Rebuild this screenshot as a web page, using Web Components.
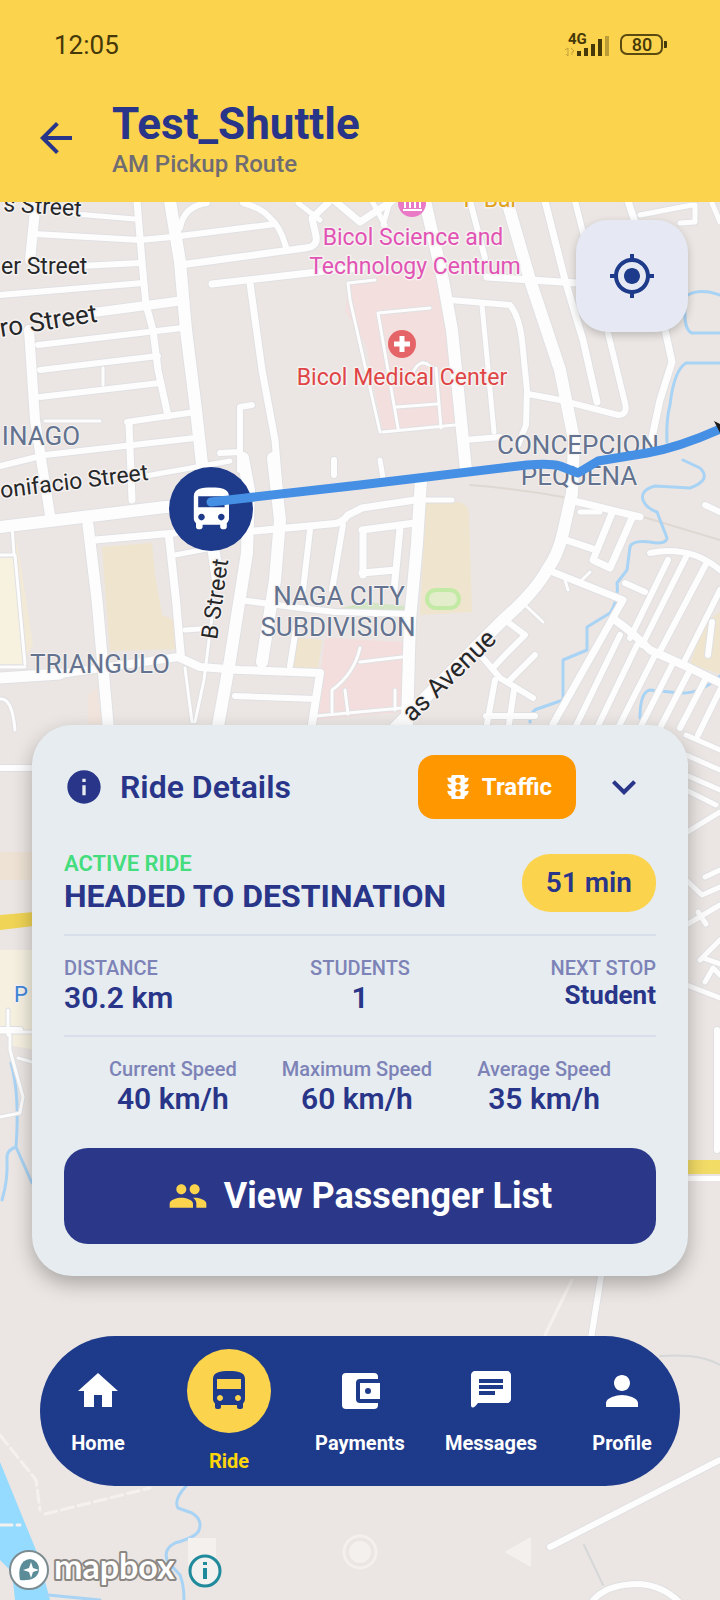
<!DOCTYPE html>
<html lang="en">
<head>
<meta charset="utf-8">
<meta name="viewport" content="width=device-width, initial-scale=1">
<title>Test_Shuttle</title>
<style>
    body {
        margin: 0;
        font-family: Roboto, "Liberation Sans", sans-serif;
        color: #283589;
    }
</style>
</head>
<body>

<ride-screen>
    <map-view slot="map"></map-view>
    <app-header slot="header" title="Test_Shuttle" subtitle="AM Pickup Route" time="12:05" battery="80"></app-header>
    <locate-button slot="locate"></locate-button>
    <ride-card slot="card" status="ACTIVE RIDE" heading="HEADED TO DESTINATION" eta="51 min">
        <stat-item slot="stats" label="DISTANCE" value="30.2 km" align="start"></stat-item>
        <stat-item slot="stats" label="STUDENTS" value="1"></stat-item>
        <stat-item slot="stats" label="NEXT STOP" value="Student" align="end" small></stat-item>
        <stat-item slot="speeds" label="Current Speed" value="40 km/h"></stat-item>
        <stat-item slot="speeds" label="Maximum Speed" value="60 km/h"></stat-item>
        <stat-item slot="speeds" label="Average Speed" value="35 km/h"></stat-item>
    </ride-card>
    <tab-bar slot="tabs">
        <tab-item icon="home">Home</tab-item>
        <tab-item icon="bus" active>Ride</tab-item>
        <tab-item icon="wallet">Payments</tab-item>
        <tab-item icon="chat">Messages</tab-item>
        <tab-item icon="person">Profile</tab-item>
    </tab-bar>
    <system-nav slot="footer"></system-nav>
    <map-attribution slot="footer"></map-attribution>
</ride-screen>

<script>
const ICONS = {
    back: 'M20 11H7.83l5.59-5.59L12 4l-8 8 8 8 1.41-1.41L7.83 13H20v-2z',
    locate: 'M12 8c-2.21 0-4 1.79-4 4s1.79 4 4 4 4-1.79 4-4-1.79-4-4-4zm8.94 3c-.46-4.17-3.77-7.48-7.94-7.94V1h-2v2.06C6.83 3.52 3.52 6.83 3.06 11H1v2h2.06c.46 4.17 3.77 7.48 7.94 7.94V23h2v-2.06c4.17-.46 7.48-3.77 7.94-7.94H23v-2h-2.06zM12 19c-3.87 0-7-3.13-7-7s3.13-7 7-7 7 3.13 7 7-3.13 7-7 7z',
    info: 'M12 2C6.48 2 2 6.48 2 12s4.48 10 10 10 10-4.48 10-10S17.52 2 12 2zm1 15h-2v-6h2v6zm0-8h-2V7h2v2z',
    traffic: 'M20 10h-3V8.86c1.72-.45 3-2 3-3.86h-3V4c0-.55-.45-1-1-1H8c-.55 0-1 .45-1 1v1H4c0 1.86 1.28 3.41 3 3.86V10H4c0 1.86 1.28 3.41 3 3.86V15H4c0 1.86 1.28 3.41 3 3.86V20c0 .55.45 1 1 1h8c.55 0 1-.45 1-1v-1.14c1.72-.45 3-2 3-3.86h-3v-1.14c1.72-.45 3-2 3-3.86zM12 19a2 2 0 1 1 0-4 2 2 0 0 1 0 4zm0-5a2 2 0 1 1 0-4 2 2 0 0 1 0 4zm0-5a2 2 0 1 1 0-4 2 2 0 0 1 0 4z',
    chevron: 'M16.59 8.59L12 13.17 7.41 8.59 6 10l6 6 6-6z',
    people: 'M16 11c1.66 0 2.99-1.34 2.99-3S17.66 5 16 5s-3 1.34-3 3 1.34 3 3 3zm-8 0c1.66 0 2.99-1.34 2.99-3S9.66 5 8 5 5 6.34 5 8s1.34 3 3 3zm0 2c-2.33 0-7 1.17-7 3.5V19h14v-2.5c0-2.33-4.67-3.5-7-3.5zm8 0c-.29 0-.62.02-.97.05 1.16.84 1.97 1.97 1.97 3.45V19h6v-2.5c0-2.33-4.67-3.5-7-3.5z',
    home: 'M10 20v-6h4v6h5v-8h3L12 3 2 12h3v8z',
    bus: 'M4 16c0 .88.39 1.67 1 2.22V20c0 .55.45 1 1 1h1c.55 0 1-.45 1-1v-1h8v1c0 .55.45 1 1 1h1c.55 0 1-.45 1-1v-1.78c.61-.55 1-1.34 1-2.22V6c0-3.5-3.58-4-8-4s-8 .5-8 4v10zm3.5 1c-.83 0-1.5-.67-1.5-1.5S6.67 14 7.5 14s1.5.67 1.5 1.5S8.33 17 7.5 17zm9 0c-.83 0-1.5-.67-1.5-1.5s.67-1.5 1.5-1.5 1.5.67 1.5 1.5-.67 1.5-1.5 1.5zm1.5-6H6V6h12v5z',
    wallet: 'M21 18v1a2 2 0 0 1-2 2H5a2 2 0 0 1-2-2V5a2 2 0 0 1 2-2h14a2 2 0 0 1 2 2v1h-9a2 2 0 0 0-2 2v8a2 2 0 0 0 2 2m0-2h10V8H12m4 5.5a1.5 1.5 0 1 1 0-3 1.5 1.5 0 0 1 0 3z',
    chat: 'M20 2H4c-1.1 0-1.99.9-1.99 2L2 19.5q.6 1.4 2 .2L5.500 18H20c1.1 0 2-.9 2-2V4c0-1.1-.9-2-2-2zM6 9h12v2H6V9zm8 5H6v-2h8v2zm4-6H6V6h12v2z',
    person: 'M12 12c2.21 0 4-1.79 4-4s-1.79-4-4-4-4 1.79-4 4 1.79 4 4 4zm0 2c-2.67 0-8 1.34-8 4v2h16v-2c0-2.66-5.33-4-8-4z'
};

function icon(name, size) {
    return `<svg width="${size}" height="${size}" viewBox="0 0 24 24" fill="currentColor" aria-hidden="true"><path fill-rule="evenodd" d="${ICONS[name]}"/></svg>`;
}

class BaseElement extends HTMLElement {

    constructor() {
        super();
        this.attachShadow({mode: 'open'});
    }

    connectedCallback() {
        this.shadowRoot.innerHTML = `
        <style>
        * { box-sizing: border-box; }
        svg { display: block; flex: none; }
        button { border: 0; padding: 0; background: none; color: inherit; font: inherit; cursor: pointer; }
        </style>` + this.render();
    }

    attr(name) {
        return this.getAttribute(name) || '';
    }
}

class RideScreen extends BaseElement {
    render() {
        return `
        <style>
        :host {
            display: grid;
            grid-template: minmax(100vh, auto) / minmax(0, 1fr);
            overflow: hidden;
        }
        .map, .overlay { grid-area: 1 / 1; }
        .map { display: grid; }
        .overlay {
            display: flex;
            flex-direction: column;
            z-index: 1;
        }
        .locate {
            display: flex;
            justify-content: flex-end;
            padding: 18px 32px;
        }
        .card {
            margin-top: auto;
            padding: 0 32px;
        }
        .tabs { padding: 60px 40px 0; }
        .footer {
            display: grid;
            height: 114px;
        }
        ::slotted([slot="footer"]) { grid-area: 1 / 1; }
        </style>
        <div class="map"><slot name="map"></slot></div>
        <div class="overlay">
            <slot name="header"></slot>
            <div class="locate"><slot name="locate"></slot></div>
            <div class="card"><slot name="card"></slot></div>
            <div class="tabs"><slot name="tabs"></slot></div>
            <div class="footer"><slot name="footer"></slot></div>
        </div>
        `;
    }
}

class AppHeader extends BaseElement {
    render() {
        return `
        <style>
        :host {
            display: block;
            background: #fcd34d;
            padding: 28px 32px 24px;
        }
        .status {
            display: flex;
            align-items: center;
            justify-content: space-between;
            padding: 0 20px 0 22px;
            margin-bottom: 36px;
            color: #453809;
            font-size: 26px;
            line-height: 34px;
        }
        .bar {
            display: flex;
            align-items: center;
            gap: 32px;
        }
        button { width: 48px; height: 48px; }
        h1, p { margin: 0; }
        h1 {
            font-size: 44px;
            line-height: 52px;
            font-weight: 700;
        }
        p {
            font-size: 24px;
            line-height: 28px;
            font-weight: 500;
            color: #6f6c74;
        }
        </style>
        <div class="status">
            <span>${this.attr('time')}</span>
            <svg width="104" height="32" viewBox="0 0 104 32" fill="#453809">
                <text x="4" y="15" font-size="15" font-weight="700">4G</text>
                <path d="M1 21l3-2v8l-2-2M7 19l3 3-2 1v3" fill="none" stroke="#c2a138" stroke-width="1"/>
                <path d="M13 22h4v5h-4zM20 19h4v8h-4zM27 15h4v12h-4zM34 10h4v17h-4z"/>
                <path d="M41 7h4v20h-4z" opacity=".35"/>
                <rect x="57" y="6" width="41" height="19" rx="6" fill="none" stroke="#5a4a12" stroke-width="2"/>
                <path d="M100 12h2q1 0 1 1v5q0 1-1 1h-2z"/>
                <text x="78" y="22" font-size="18" font-weight="500" text-anchor="middle">${this.attr('battery')}</text>
            </svg>
        </div>
        <div class="bar">
            <button aria-label="Back">${icon('back', 48)}</button>
            <div>
                <h1>${this.attr('title')}</h1>
                <p>${this.attr('subtitle')}</p>
            </div>
        </div>
        `;
    }
}

// [width, path]
const ROADS = [
    [3, 'M0 555H15L25 664M12 525L14 555M0 667H25M185 668L192 722M214 600L204 680L195 722M0 699Q12 697 15 730M103 368V385M45 421H100'],
    [3, 'M380 432L350 300L348 283L375 280M378 313L430 308M378 313L398 428M397 407L437 404M412 374Q420 357 430 366M436 368L441 428M383 432L455 425M525 605L543 622M590 572L582 580M565 580L568 590'],
    [3, 'M360 662L402 657M360 648Q354 674 332 690L332 712M345 690L348 714M316 716L402 708M395 690V710M8 1010V1035M0 1032H32M0 1117L20 1113L23 1097L10 1050V1035M32 1062L18 1058'],
    [5, 'M75 214L135 219M140 477L230 461M175 555L212 548M185 630L215 628M425 500H452M482 305L494 432M380 460L383 478M463 445L465 465M298 203L320 220'],
    [6, 'M35 234L140 240L172 237L275 224M180 228Q184 206 207 203M243 203Q262 208 270 218Q280 226 286 247M80 266L140 263M0 295L143 283'],
    [7, 'M137 201L142 262L146 305L153 330L158 370L168 416M180 265L305 248Q318 247 316 236L312 218L328 203M335 201L360 222L392 201'],
    [9, 'M90 313L180 301'],
    [7, 'M212 284L335 270L362 268M250 283L262 370L275 440L280 500M487 277L577 283'],
    [6, 'M38 345L182 328M40 370L158 356M40 397L160 383M127 422L195 412M0 466L45 455L195 438M252 405L240 407V470M220 453L240 452'],
    [7, 'M129 424L132 500M95 540L175 533M255 531L330 524Q342 524 348 515L362 508L415 500'],
    [10, 'M36 201L30 260M29 330L35 420L42 465L50 515'],
    [12, 'M170 201L180 262L186 330L196 410L206 500L218 580M0 527L165 507L210 506'],
    [8, 'M169 537L176 600L181 658'],
    [11, 'M88 525L97 600L108 724M0 678L60 674'],
    [8, 'M60 674L178 657L200 667L240 670L320 673L312 724'],
    [12, 'M243 458L249 490L247 553L230 660L218 726M273 458L280 520L275 580L262 662'],
    [6, 'M310 530L303 590M343 525L332 590M240 600L300 608L335 612L412 614M290 666L297 622M235 696L315 699M334 460V475'],
    [7, 'M362 530L415 523M400 528L394 590M363 532V575M362 573L396 570'],
    [12, 'M425 201L443 280L452 330L463 440L466 470M421 480L417 543L410 620L407 724'],
    [12, 'M507 201L530 280L560 370L574 440L572 493L563 533Q558 555 547 570Q535 592 503 620L395 728'],
    [6, 'M470 201L485 258M450 300L510 305Q519 316 522 340L527 390L526 425L518 445M465 440L500 437M528 394L560 400L618 415Q628 415 625 403L600 300L575 201'],
    [7, 'M545 201L565 280L583 340L597 402M628 201L636 225M664 325L672 362L660 400L651 442'],
    [5, 'M640 215L692 205M680 223L695 222V205M712 203L720 222M390 202L383 225M372 201L385 225M580 512H600'],
    [7, 'M574 501L640 517M612 513L593 560L610 568L632 518M566 540L596 550M553 572L623 600L553 724'],
    [6, 'M505 620L525 635L505 655L493 668M535 655L510 680M478 652L500 678L533 698M495 680L487 724M514 690L509 724M486 716H535'],
    [6, 'M650 553Q690 545 720 570M625 583L645 592M668 560L630 638M686 557L642 645M706 564L658 655M720 590L685 660M705 505L720 512M708 655L712 622'],
    [8, 'M615 620Q630 630 650 650L690 668L720 683'],
    [6, 'M620 635L575 728M637 645L597 728M655 655L618 728M673 663L640 728M690 670L660 728M706 678L680 728M720 690L698 735'],
    [5, 'M686 735L720 750M686 755L720 770M686 775L720 790M686 790L716 805M684 834L720 812M705 877L720 870M686 880L702 895L720 887M686 925L720 905M698 912L706 924M700 960L720 940M703 958L720 964M684 984L720 998M705 982L713 968L720 975'],
    [6, 'M717 1030V1150M0 768H40M0 1030H20M602 1270L590 1345M550 1547L720 1460M590 1605Q602 1584 640 1584Q665 1586 682 1605']
];

const PATCHES = [
    ['#f3dfdd', 'M350 282L437 265L445 330L455 425L383 432L366 345L345 310z'],
    ['#efe4cd', 'M102 547L152 543L155 575L162 615L174 620L177 649L110 651z'],
    ['#efe4cd', 'M426 502H456Q468 502 469 515L472 612L420 615z'],
    ['#efe4cd', 'M298 638L322 640L318 670L293 668z'],
    ['#f7f2df', 'M0 558H14L25 664H0z'],
    ['#f2e9d6', 'M14 530L20 560L33 645L24 660z'],
    ['#f3dedd', 'M325 638L405 642L403 712L314 720z'],
    ['#f0e4dc', 'M88 695L97 688L102 724H88z'],
    ['#d4e5c6', 'M333 610L366 602L405 606V612H333z'],
    ['#efe4cd', 'M705 622L720 612V674L690 664z'],
    ['#ede2d4', 'M0 852H36V880H0z'],
    ['#f5f0e0', 'M0 950H36V1050L8 1045V1030H0z'],
    ['#95dbff', 'M0 1462L38 1555L50 1600H15L12 1572L0 1560z']
];

const WATER = [
    'M683 460L700 468Q712 480 690 488L655 486Q640 490 643 500Q646 508 657 512L667 538Q666 545 650 542Q632 540 630 547L627 570L617 583Q619 600 610 613L587 627V650L563 660V700L540 708Q530 710 530 722',
    'M667 442Q666 420 670 405Q674 370 686 363H720M685 310Q684 330 692 333H720M688 295Q700 288 720 295M640 718Q640 692 650 690L680 693Q700 694 720 676',
    'M11 1063Q20 1095 16 1147L32 1183M16 1147Q6 1150 7 1160Q8 1180 2 1200',
    'M187 1485Q173 1500 178 1508L192 1513Q203 1520 199 1530Q197 1537 175 1543Q162 1550 168 1562L180 1575Q184 1585 184 1600M48 1595L100 1600'
];

class MapView extends BaseElement {
    render() {
        const casing = ROADS.map(([w, d]) => `<path d="${d}" stroke-width="${w + 2}"/>`).join('');
        const fill = ROADS.map(([w, d]) => `<path d="${d}" stroke-width="${w}"/>`).join('');
        const patches = PATCHES.map(([color, d]) => `<path d="${d}" fill="${color}"/>`).join('');
        const water = WATER.map(d => `<path d="${d}"/>`).join('');

        return `
        <style>
        :host {
            display: block;
            contain: size;
            background: #ebe6e3;
        }
        svg { width: 100%; height: 100%; }
        .lines { fill: none; stroke-linejoin: round; stroke-linecap: round; }
        text { paint-order: stroke; stroke: #f5f2f1; stroke-width: 3px; stroke-linejoin: round; }
        .street { fill: #262729; font-size: 23px; }
        .large { font-size: 26px; }
        .place { fill: #63728f; font-size: 26px; text-anchor: middle; stroke-width: 2px; }
        .poi { font-size: 23px; text-anchor: middle; }
        .museum { fill: #e254b4; }
        .hospital { fill: #e04546; }
        .food { fill: #e0a21c; }
        .water { fill: #3f86d8; font-size: 22px; }
        </style>
        <svg viewBox="0 0 720 1600" preserveAspectRatio="xMidYMin slice" role="img" aria-label="Route map">
            ${patches}
            <g class="lines" stroke="#dfd7d1" stroke-width="2"><path d="M470 485Q560 492 630 513L720 540"/></g>
            <g class="lines" stroke="#a8d3f4" stroke-width="3">${water}</g>
            <g class="lines" stroke="#e0e0e3">${casing}</g>
            <g class="lines" stroke="#fdfdfe">${fill}</g>
            <g class="lines" stroke="#f4f1ee" stroke-width="3">
                <path d="M572 1280L545 1335"/>
                <path d="M45 1514L150 1488M0 1435L36 1480L40 1510M0 1525H20" stroke-dasharray="12 5"/>
            </g>
            <g class="lines" stroke="#d6d7d8" stroke-width="2"><path d="M660 1356Q700 1353 720 1365M584 1545L603 1585"/></g>
            <path d="M0 915L34 912V926L0 930z" fill="#f0d455"/>
            <path d="M686 1160H720V1174H686z" fill="#f3dc66"/>
            <path d="M686 1176H720V1181H686z" fill="#fff"/>
            <rect x="427" y="590" width="32" height="18" rx="9" fill="#e3eccb" stroke="#c3eaa4" stroke-width="4"/>

            <text class="street" x="3" y="211" transform="rotate(4 3 211)">s Street</text>
            <text class="street" x="1" y="274">er Street</text>
            <text class="street large" x="1" y="337" transform="rotate(-9 1 337)">ro Street</text>
            <text class="street" x="1" y="498" transform="rotate(-7 1 498)">onifacio Street</text>
            <text class="street" x="217" y="640" transform="rotate(-82 217 640)">B Street</text>
            <text class="street large" x="412" y="723" transform="rotate(-44 412 723)">as Avenue</text>
            <text class="place" x="41" y="445">INAGO</text>
            <text class="place" x="578" y="454">CONCEPCION</text>
            <text class="place" x="579" y="485">PEQUENA</text>
            <text class="place" x="100" y="673">TRIANGULO</text>
            <text class="place" x="339" y="605">NAGA CITY</text>
            <text class="place" x="338" y="636">SUBDIVISION</text>
            <text class="poi food" x="491" y="207">P Bar</text>
            <text class="poi museum" x="413" y="245">Bicol Science and</text>
            <text class="poi museum" x="415" y="274">Technology Centrum</text>
            <text class="poi hospital" x="402" y="385">Bicol Medical Center</text>
            <text class="water" x="14" y="1002">P</text>

            <circle cx="412" cy="203" r="14" fill="#ea79c6"/>
            <path d="M405 199v9M410 199v9M415 199v9M420 199v9M403 210h19" stroke="#fff" stroke-width="2"/>
            <circle cx="402" cy="344" r="14" fill="#e46467"/>
            <path d="M402 336v16M394 344h16" stroke="#fff" stroke-width="5"/>

            <circle cx="211" cy="509" r="42" fill="#1e3a8a"/>
            <path transform="translate(185 483) scale(2.2)" fill="#fff" fill-rule="evenodd" d="${ICONS.bus}"/>
            <path class="lines" d="M211 502L360 485L527 465Q550 463 560 466L578 473L598 461L647 453Q680 447 720 429" stroke="#458fe4" stroke-width="9"/>
            <path d="M714 421l6 3v9z" fill="#1c1c1c"/>
        </svg>
        `;
    }
}

class LocateButton extends BaseElement {
    render() {
        return `
        <style>
        :host { display: block; }
        button {
            display: grid;
            place-items: center;
            width: 112px;
            height: 112px;
            border-radius: 32px;
            background: #e6e9f3;
            color: #1e3a8a;
            box-shadow: 0 3px 8px rgba(0, 0, 0, .2);
        }
        </style>
        <button aria-label="Center on my location">${icon('locate', 48)}</button>
        `;
    }
}

class RideCard extends BaseElement {
    render() {
        return `
        <style>
        :host {
            display: block;
            padding: 30px 32px 32px;
            border-radius: 40px;
            background: #e6ecf0;
            box-shadow: 0 8px 20px rgba(0, 0, 0, .28);
        }
        header, .summary, .stats, .speeds { display: flex; align-items: center; }
        header { gap: 16px; }
        h2, h3, p { margin: 0; }
        h2 {
            flex: 1;
            font-size: 32px;
            line-height: 38px;
            font-weight: 600;
        }
        .traffic {
            display: flex;
            align-items: center;
            gap: 8px;
            height: 64px;
            padding: 0 24px;
            border-radius: 16px;
            background: #ff9800;
            color: #fff;
            font-size: 24px;
            font-weight: 700;
        }
        .toggle { padding: 8px; }
        .summary {
            justify-content: space-between;
            margin-top: 32px;
        }
        .summary p {
            color: #43dd7d;
            font-size: 22px;
            line-height: 26px;
            font-weight: 600;
        }
        h3 {
            font-size: 32px;
            line-height: 38px;
            font-weight: 700;
        }
        .eta {
            padding: 12px 24px;
            border-radius: 28px;
            background: #fcd34d;
            font-size: 28px;
            line-height: 34px;
            font-weight: 600;
        }
        .stats, .speeds {
            align-items: flex-start;
            margin-top: 19px;
            padding-top: 20px;
            border-top: 2px solid #d9dfea;
        }
        .stats { justify-content: space-between; }
        ::slotted([slot="stats"]) { flex: 1; }
        .speeds { justify-content: space-evenly; }
        .passengers {
            display: flex;
            align-items: center;
            justify-content: center;
            gap: 16px;
            width: 100%;
            height: 96px;
            margin-top: 31px;
            border-radius: 24px;
            background: #2b388a;
            color: #fff;
            font-size: 36px;
            font-weight: 700;
        }
        .passengers svg { color: #fcd34d; }
        </style>
        <header>
            ${icon('info', 40)}
            <h2>Ride Details</h2>
            <button class="traffic">${icon('traffic', 32)}Traffic</button>
            <button class="toggle" aria-label="Collapse ride details">${icon('chevron', 48)}</button>
        </header>
        <div class="summary">
            <div>
                <p>${this.attr('status')}</p>
                <h3>${this.attr('heading')}</h3>
            </div>
            <span class="eta">${this.attr('eta')}</span>
        </div>
        <div class="stats"><slot name="stats"></slot></div>
        <div class="speeds"><slot name="speeds"></slot></div>
        <button class="passengers">${icon('people', 40)}View Passenger List</button>
        `;
    }
}

class StatItem extends BaseElement {
    render() {
        return `
        <style>
        :host { display: block; text-align: center; }
        :host([align="start"]) { text-align: left; }
        :host([align="end"]) { text-align: right; }
        .label {
            color: #7d83b7;
            font-size: 20px;
            line-height: 24px;
            font-weight: 500;
        }
        .value {
            font-size: 30px;
            line-height: 36px;
            font-weight: 600;
        }
        :host([small]) .value { font-size: 26px; line-height: 30px; font-weight: 700; }
        </style>
        <div class="label">${this.attr('label')}</div>
        <div class="value">${this.attr('value')}</div>
        `;
    }
}

class TabBar extends BaseElement {
    render() {
        return `
        <style>
        :host { display: block; }
        nav {
            display: flex;
            align-items: center;
            justify-content: space-between;
            min-height: 150px;
            border-radius: 75px;
            background: #1e3a8a;
        }
        </style>
        <nav><slot></slot></nav>
        `;
    }
}

class TabItem extends BaseElement {
    render() {
        return `
        <style>
        :host { display: block; width: 116px; }
        a {
            display: flex;
            flex-direction: column;
            align-items: center;
            gap: 16px;
            color: #fff;
            font-size: 20px;
            line-height: 24px;
            font-weight: 700;
            text-decoration: none;
        }
        :host([active]) a { color: #ffd60a; }
        :host([active]) .icon {
            padding: 18px;
            border-radius: 50%;
            background: #fcd34d;
            color: #1e3a8a;
        }
        </style>
        <a href="#"><span class="icon">${icon(this.attr('icon'), 48)}</span><slot></slot></a>
        `;
    }
}

class SystemNav extends BaseElement {
    render() {
        return `
        <style>
        :host { display: block; padding: 48px 184px 0; }
        div { display: flex; justify-content: space-between; }
        </style>
        <div>
            <svg width="36" height="36" viewBox="0 0 36 36"><path d="M4 4h28v28H4z" fill="#f3f0ed"/></svg>
            <svg width="36" height="36" viewBox="0 0 36 36"><circle cx="18" cy="18" r="16" fill="none" stroke="#f3f0ed" stroke-width="3"/><circle cx="18" cy="18" r="11" fill="#f3f0ed"/></svg>
            <svg width="36" height="36" viewBox="0 0 36 36"><path d="M4 18L31 3v30z" fill="#f3f0ed"/></svg>
        </div>
        `;
    }
}

class MapAttribution extends BaseElement {
    render() {
        return `
        <style>
        :host {
            display: flex;
            align-items: flex-end;
            gap: 8px;
            padding: 0 8px 8px;
        }
        button { height: 44px; color: #1f8a9c; }
        </style>
        <svg width="172" height="44" viewBox="0 0 172 44" role="img" aria-label="Mapbox">
            <circle cx="21" cy="22" r="19" fill="#fff" stroke="#7c8c90" stroke-width="2"/>
            <path d="M12 32c-2-10 0-20 10-21a10 10 0 0 1 9 11c-1 9-10 11-19 10z" fill="#5b8c98"/>
            <path d="M23 14l2 6 6 2-6 2-2 6-2-6-6-2 6-2z" fill="#fff"/>
            <text x="46" y="31" font-family="Lato, sans-serif" font-size="34" font-weight="700" fill="#fff" stroke="#8b8783" stroke-width="4" stroke-linejoin="round" paint-order="stroke">mapbox</text>
        </svg>
        <button aria-label="Map information">
            <svg width="36" height="44" viewBox="0 0 36 44" fill="none" stroke="currentColor">
                <circle cx="17" cy="23" r="15" fill="#f1f1ef" stroke-width="3"/>
                <path d="M17 20v11M17 14v3" stroke-width="4"/>
            </svg>
        </button>
        `;
    }
}

customElements.define('ride-screen', RideScreen);
customElements.define('app-header', AppHeader);
customElements.define('map-view', MapView);
customElements.define('locate-button', LocateButton);
customElements.define('ride-card', RideCard);
customElements.define('stat-item', StatItem);
customElements.define('tab-bar', TabBar);
customElements.define('tab-item', TabItem);
customElements.define('system-nav', SystemNav);
customElements.define('map-attribution', MapAttribution);
</script>
</body>
</html>
